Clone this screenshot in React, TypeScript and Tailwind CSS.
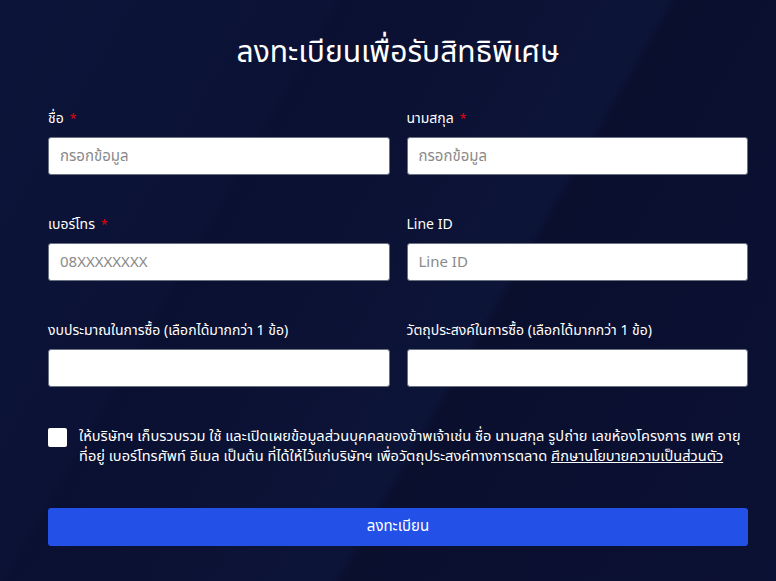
import React from "react";

const Label = ({ text, required }: { text: string; required?: boolean }) => (
  <label className="block text-[14px] leading-[20px] text-white mb-[8px]">
    {text}
    {required && <span className="text-red-600 ml-[6px] text-[12px]">*</span>}
  </label>
);

const Field = ({
  label,
  required,
  placeholder,
}: {
  label: string;
  required?: boolean;
  placeholder?: string;
}) => (
  <div>
    <Label text={label} required={required} />
    <input
      placeholder={placeholder}
      className="block w-full h-[38px] rounded-[3px] bg-white border border-gray-500 px-[11px] text-[15px] text-gray-800 placeholder:text-[#8a8a8a] outline-none"
    />
  </div>
);

export default function App() {
  return (
    <div
      className="w-[776px] h-[581px] overflow-hidden bg-[#0a1031] bg-[linear-gradient(120deg,#0c1439_0%,#0b1236_30%,#0a1031_31%,#0c1438_60%,#0a0f2e_61%,#0b1134_100%)] pl-[48px] pr-[28px] pt-[35px] font-stretch-condensed"
      style={{ fontFamily: "'Noto Sans Thai', 'Noto Sans', 'Liberation Sans', sans-serif" }}
    >
      {/* TITLE */}
      <h1 className="text-center text-white text-[30px] leading-[36px] font-normal">
        ลงทะเบียนเพื่อรับสิทธิพิเศษ
      </h1>

      {/* FORM */}
      <div className="mt-[38px] grid grid-cols-2 gap-x-[17px] gap-y-[40px]">
        <Field label="ชื่อ" required placeholder="กรอกข้อมูล" />
        <Field label="นามสกุล" required placeholder="กรอกข้อมูล" />
        <Field label="เบอร์โทร" required placeholder="08XXXXXXXX" />
        <Field label="Line ID" placeholder="Line ID" />
        <Field label="งบประมาณในการซื้อ (เลือกได้มากกว่า 1 ข้อ)" />
        <Field label="วัตถุประสงค์ในการซื้อ (เลือกได้มากกว่า 1 ข้อ)" />
      </div>

      {/* CONSENT */}
      <div className="mt-[40px] flex items-start gap-[12px]">
        <input type="checkbox" className="appearance-none mt-[1px] w-[19px] h-[19px] shrink-0 bg-white rounded-[2px]" />
        <p className="text-white text-[14.6px] leading-[20px] whitespace-nowrap">
          ให้บริษัทฯ เก็บรวบรวม ใช้ และเปิดเผยข้อมูลส่วนบุคคลของข้าพเจ้าเช่น ชื่อ นามสกุล รูปถ่าย เลขห้องโครงการ เพศ อายุ
          <br />
          ที่อยู่ เบอร์โทรศัพท์ อีเมล เป็นต้น ที่ได้ให้ไว้แก่บริษัทฯ เพื่อวัตถุประสงค์ทางการตลาด{" "}
          <a className="underline">ศึกษานโยบายความเป็นส่วนตัว</a>
        </p>
      </div>

      {/* SUBMIT */}
      <button className="mt-[41px] w-full h-[38px] rounded-[3px] bg-[#2350e6] text-white text-[15px]">
        ลงทะเบียน
      </button>
    </div>
  );
}
